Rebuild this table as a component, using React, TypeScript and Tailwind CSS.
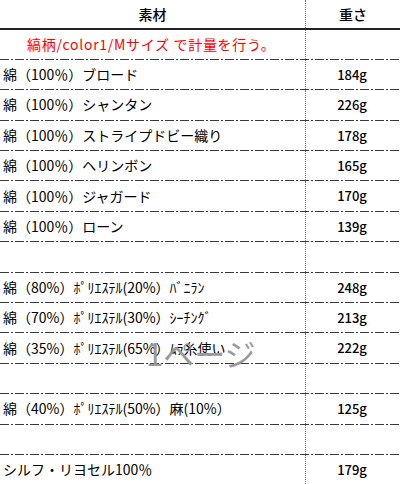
const rows: { name: string; weight: string; red?: boolean }[] = [
  { name: "縞柄/color1/Mサイズ で計量を行う。", weight: "", red: true },
  { name: "綿（100％）ブロード", weight: "184g" },
  { name: "綿（100％）シャンタン", weight: "226g" },
  { name: "綿（100％）ストライプドビー織り", weight: "178g" },
  { name: "綿（100％）ヘリンボン", weight: "165g" },
  { name: "綿（100％）ジャガード", weight: "170g" },
  { name: "綿（100％）ローン", weight: "139g" },
  { name: "", weight: "" },
  { name: "綿（80%）ﾎﾟﾘｴｽﾃﾙ(20%）ﾊﾞﾆﾗﾝ", weight: "248g" },
  { name: "綿（70%）ﾎﾟﾘｴｽﾃﾙ(30%）ｼｰﾁﾝｸﾞ", weight: "213g" },
  { name: "綿（35%）ﾎﾟﾘｴｽﾃﾙ(65%）ﾑﾗ糸使い", weight: "222g" },
  { name: "", weight: "" },
  { name: "綿（40%）ﾎﾟﾘｴｽﾃﾙ(50%）麻(10%）", weight: "125g" },
  { name: "", weight: "" },
  { name: "シルフ・リヨセル100％", weight: "179g" },
];

// dash-dot rule used between rows
const DashDot = () => (
  <div className="h-px w-full bg-[repeating-linear-gradient(to_right,#3a3a3a_0_9px,transparent_9px_11px,#3a3a3a_11px_13px,transparent_13px_15px)]" />
);

export default function App() {
  return (
    <div className="relative h-[484px] w-[400px] overflow-hidden bg-white font-['Noto_Sans_CJK_JP',sans-serif] text-[14px] text-black">
      {/* header */}
      <div className="flex h-[28px]">
        <div className="flex w-[306px] items-center justify-center border-r border-dotted border-[#777] font-medium">
          素材
        </div>
        <div className="flex flex-1 items-center justify-center font-medium">重さ</div>
      </div>
      <div className="h-[1.5px] w-full bg-[#222]" />

      {rows.map((r, i) => (
        <div key={i} className="flex h-[30.4px] flex-col">
          <div className="flex flex-1">
            <div
              className={
                r.red
                  ? "flex w-[306px] items-center whitespace-nowrap border-r border-dotted border-[#777] pl-[27px] tracking-[0.7px] text-[#ff0000]"
                  : "flex w-[306px] items-center whitespace-nowrap border-r border-dotted border-[#777] pl-[3px]"
              }
            >
              {r.name}
            </div>
            <div className="flex flex-1 items-center justify-center pr-[2px] text-[13px] font-medium">{r.weight}</div>
          </div>
          <DashDot />
        </div>
      ))}

      {/* page-break watermark */}
      <div className="pointer-events-none absolute left-[146px] top-[337px] whitespace-nowrap text-[31px] leading-none text-[#999]">
        1ページ
      </div>
    </div>
  );
}
